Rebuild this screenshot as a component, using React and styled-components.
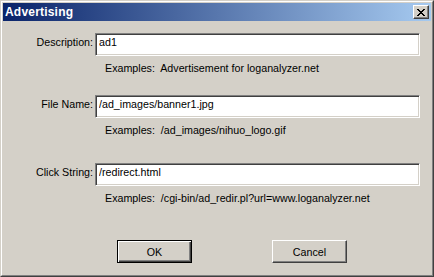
import React from "react";
import styled, { createGlobalStyle } from "styled-components";

const Global = createGlobalStyle`
  html, body { margin: 0; padding: 0; background: #d4d0c8; }
  body { font-family: "Liberation Sans", Arial, sans-serif; font-size: 10.7px; }
  * { box-sizing: border-box; }
`;

const Window = styled.div`
  width: 434px;
  height: 277px;
  border: 1px solid;
  border-color: #d4d0c8 #404040 #404040 #d4d0c8;
  background: #d4d0c8;
`;

const Frame = styled.div`
  height: 100%;
  border: 1px solid;
  border-color: #ffffff #808080 #808080 #ffffff;
  padding: 1px;
  display: flex;
  flex-direction: column;
`;

const TitleBar = styled.div`
  height: 18px;
  flex: none;
  display: flex;
  align-items: center;
  justify-content: space-between;
  padding: 0 2px 0 2px;
  background: linear-gradient(to right, #0a246a, #a6caf0);
`;

const Title = styled.span`
  color: #ffffff;
  font-weight: bold;
  font-size: 12px;
  letter-spacing: 0.2px;
  line-height: 14px;
`;

const CloseButton = styled.button`
  width: 16px;
  height: 14px;
  padding: 0;
  margin: 0;
  background: #d4d0c8;
  border: 1px solid;
  border-color: #ffffff #404040 #404040 #ffffff;
  box-shadow: inset -1px -1px #808080;
  display: flex;
  align-items: center;
  justify-content: center;
`;

const Body = styled.div`
  flex: 1;
  padding-top: 12px;
  display: flex;
  flex-direction: column;
`;

const Section = styled.div`
  margin-top: ${(p) => p.$gap}px;
  display: flex;
  flex-direction: column;
`;

const FieldRow = styled.div`
  display: grid;
  grid-template-columns: 90px 325px;
  column-gap: 2px;
  align-items: start;
`;

const Label = styled.label`
  text-align: right;
  color: #000;
  line-height: 13px;
  padding-top: 3px;
  white-space: nowrap;
`;

const TextInput = styled.input`
  height: 23px;
  width: 100%;
  margin: 0;
  border: 1px solid;
  border-color: #808080 #ffffff #ffffff #808080;
  box-shadow: inset 1px 1px #404040, inset -1px -1px #d4d0c8;
  background: #ffffff;
  padding: 0 3px 5px 3px;
  font-family: "Liberation Sans", Arial, sans-serif;
  font-size: 10.7px;
  color: #000;
  outline: none;
`;

const Example = styled.div`
  margin-top: 6px;
  padding-left: 102px;
  line-height: 13px;
  white-space: pre;
  color: #000;
`;

const ButtonBar = styled.div`
  margin-top: 35px;
  display: flex;
  gap: 80px;
  padding-left: 114px;
`;

const Button = styled.button`
  width: 75px;
  height: 23px;
  margin: 0;
  padding: 0;
  background: #d4d0c8;
  font-family: "Liberation Sans", Arial, sans-serif;
  font-size: 10.7px;
  color: #000;
  border: 1px solid;
  border-color: ${(p) => (p.$default ? "#000 #000 #000 #000" : "#ffffff #404040 #404040 #ffffff")};
  box-shadow: ${(p) =>
    p.$default
      ? "inset 1px 1px #ffffff, inset -1px -1px #404040, inset -2px -2px #808080"
      : "inset -1px -1px #808080"};
`;

const fields = [
  { label: "Description:", value: "ad1", example: "Examples:  Advertisement for loganalyzer.net", gap: 0 },
  { label: "File Name:", value: "/ad_images/banner1.jpg", example: "Examples:  /ad_images/nihuo_logo.gif", gap: 20 },
  { label: "Click String:", value: "/redirect.html", example: "Examples:  /cgi-bin/ad_redir.pl?url=www.loganalyzer.net", gap: 26 },
];

export default function App() {
  return (
    <>
      <Global />
      <Window>
        <Frame>
          <TitleBar>
            <Title>Advertising</Title>
            <CloseButton aria-label="Close">
              <svg width="8" height="7" viewBox="0 0 8 7" shapeRendering="crispEdges">
                <path d="M0 0h2v1h-2zM6 0h2v1h-2zM1 1h2v1h-2zM5 1h2v1h-2zM2 2h4v1h-4zM3 3h2v1h-2zM2 4h4v1h-4zM1 5h2v1h-2zM5 5h2v1h-2zM0 6h2v1h-2zM6 6h2v1h-2z" fill="#000" />
              </svg>
            </CloseButton>
          </TitleBar>
          <Body>
            {fields.map((f) => (
              <Section key={f.label} $gap={f.gap}>
                <FieldRow>
                  <Label>{f.label}</Label>
                  <TextInput defaultValue={f.value} readOnly />
                </FieldRow>
                <Example>{f.example}</Example>
              </Section>
            ))}
            <ButtonBar>
              <Button $default>OK</Button>
              <Button>Cancel</Button>
            </ButtonBar>
          </Body>
        </Frame>
      </Window>
    </>
  );
}
